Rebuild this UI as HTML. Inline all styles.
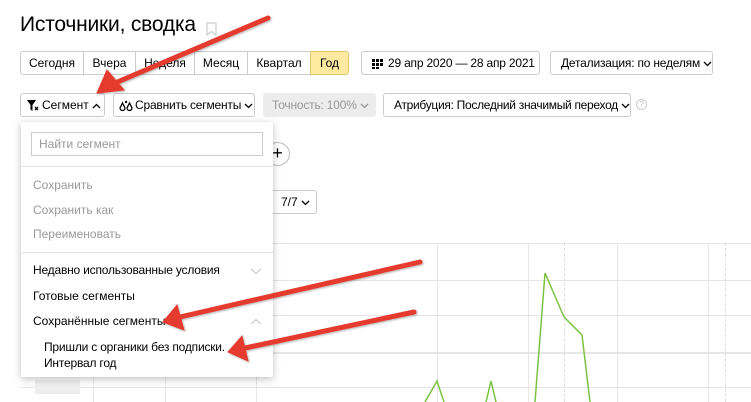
<!DOCTYPE html>
<html><head><meta charset="utf-8"><style>
*{box-sizing:border-box;margin:0;padding:0}
body{width:751px;height:402px;overflow:hidden;background:#fff;font-family:"Liberation Sans",sans-serif;color:#000;position:relative;font-size:12px}
.a{position:absolute}
.btn{position:absolute;border:1px solid #ccc;border-radius:3px;height:24px;line-height:22px;font-size:12px;padding:0 8px;white-space:nowrap;background:#fff}
.seg{position:absolute;top:51px;height:24px;border:1px solid #ccc;line-height:22px;font-size:12px;text-align:center;background:#fff}
.gl{position:absolute;background:#e6e6e6}
.menu{position:absolute;left:21px;top:122px;width:252px;height:255px;background:#fff;box-shadow:0 2px 8px rgba(0,0,0,.25);border-radius:2px}
.mi{position:absolute;left:12px;font-size:12px}
.g{color:#999}
.cv{display:inline-block;vertical-align:middle;margin-left:3px}
</style></head><body>
<div class="a" style="left:20px;top:13px;font-size:21px;letter-spacing:-0.2px">Источники, сводка</div>
<svg class="a" style="left:206px;top:22px" width="11" height="14"><path d="M1 1h9v12l-4.5-3.5L1 13z" fill="none" stroke="#ccc" stroke-width="1.2"/></svg>

<div class="seg" style="left:20px;width:64px;border-radius:3px 0 0 3px">Сегодня</div>
<div class="seg" style="left:83px;width:53px">Вчера</div>
<div class="seg" style="left:135px;width:60px">Неделя</div>
<div class="seg" style="left:194px;width:54px">Месяц</div>
<div class="seg" style="left:247px;width:64px">Квартал</div>
<div class="seg" style="left:310px;width:39px;background:#fdeaa0;border-color:#e2c96e;border-radius:0 3px 3px 0">Год</div>

<div class="btn" style="left:361px;top:51px;width:179px;padding-left:10px;letter-spacing:-0.2px"><svg class="cv" style="margin:0 5px 0 0" width="11" height="10"><g fill="#000"><rect x="0" y="0" width="3" height="3"/><rect x="4" y="0" width="3" height="3"/><rect x="8" y="0" width="3" height="3"/><rect x="0" y="4" width="3" height="3"/><rect x="4" y="4" width="3" height="3"/><rect x="8" y="4" width="3" height="3"/><rect x="0" y="8" width="3" height="2"/><rect x="4" y="8" width="3" height="2"/></g></svg>29 апр 2020 — 28 апр 2021</div>
<div class="btn" style="left:550px;top:51px;width:163px;padding-left:10px;letter-spacing:-0.2px">Детализация: по неделям<svg class="cv" width="9" height="6"><path d="M1 1l3.5 3.5L8 1" fill="none" stroke="#000" stroke-width="1.3"/></svg></div>

<div class="btn" style="left:20px;top:93px;width:85px;padding-left:6px"><svg class="cv" style="margin:0 3px 0 0" width="12" height="11"><path d="M0 0h9L5.5 5v6L3.5 9.5V5z" fill="#000"/><path d="M8 7l3 3M11 7l-3 3" stroke="#000" stroke-width="1.3"/></svg>Сегмент<svg class="cv" width="9" height="6"><path d="M1 5l3.5-3.5L8 5" fill="none" stroke="#000" stroke-width="1.3"/></svg></div>
<div class="btn" style="left:113px;top:93px;width:142px;padding-left:5px;letter-spacing:-0.2px"><svg class="cv" style="margin:0 2px 0 0" width="14" height="12"><path d="M3.5 3L1 8a2.5 2.5 0 005 0z M10.5 3L8 8a2.5 2.5 0 005 0z" fill="none" stroke="#000" stroke-width="1.3"/><circle cx="7" cy="2" r="1.2"/></svg>Сравнить сегменты<svg class="cv" width="9" height="6"><path d="M1 1l3.5 3.5L8 1" fill="none" stroke="#000" stroke-width="1.3"/></svg></div>
<div class="btn" style="left:263px;top:93px;width:113px;background:#ececec;border-color:#ececec;color:#999;letter-spacing:-0.2px">Точность: 100%<svg class="cv" width="9" height="6"><path d="M1 1l3.5 3.5L8 1" fill="none" stroke="#999" stroke-width="1.3"/></svg></div>
<div class="btn" style="left:383px;top:93px;width:248px;padding-left:10px;letter-spacing:-0.3px">Атрибуция: Последний значимый переход<svg class="cv" width="9" height="6"><path d="M1 1l3.5 3.5L8 1" fill="none" stroke="#000" stroke-width="1.3"/></svg></div>
<div class="a" style="left:636px;top:99px;width:11px;height:11px;border:1px solid #ccc;border-radius:50%;font-size:8px;color:#bbb;text-align:center;line-height:9px">?</div>

<div class="a" style="left:265px;top:142px;width:25px;height:24px;border:1px solid #bbb;border-radius:50%;text-align:center;line-height:21px;font-size:18px">+</div>
<div class="btn" style="left:265px;top:190px;width:52px;padding-left:15px">7/7<svg class="cv" width="9" height="6"><path d="M1 1l3.5 3.5L8 1" fill="none" stroke="#000" stroke-width="1.3"/></svg></div>

<div class="gl" style="left:273px;top:243px;width:478px;height:1px"></div>
<div class="gl" style="left:273px;top:280px;width:478px;height:1px"></div>
<div class="gl" style="left:273px;top:315px;width:478px;height:1px"></div>
<div class="gl" style="left:273px;top:352px;width:478px;height:2px"></div>
<div class="gl" style="left:20px;top:387px;width:731px;height:1px"></div>
<div class="gl" style="left:437px;top:243px;width:1px;height:159px"></div>
<div class="gl" style="left:528px;top:243px;width:1px;height:159px"></div>
<div class="gl" style="left:617px;top:243px;width:1px;height:159px"></div>
<div class="gl" style="left:708px;top:243px;width:1px;height:159px"></div>
<div class="gl" style="left:93px;top:377px;width:1px;height:25px"></div>
<div class="gl" style="left:165px;top:377px;width:1px;height:25px"></div>
<div class="gl" style="left:256px;top:377px;width:1px;height:25px"></div>
<div class="a" style="left:564px;top:243px;height:159px;border-left:1px dashed #ddd"></div>
<div class="a" style="left:725px;top:243px;height:159px;border-left:1px dashed #ddd"></div>
<div class="a" style="left:35px;top:380px;width:45px;height:14px;background:#eee"></div>
<svg class="a" style="left:0;top:0" width="751" height="402">
<polyline points="425,402 437,381 444,402" fill="none" stroke="#7cc242" stroke-width="1.5"/>
<polyline points="486,402 491,381 496,402" fill="none" stroke="#7cc242" stroke-width="1.5"/>
<polyline points="535,402 545,273 564,317 582,335 590,402" fill="none" stroke="#7cc242" stroke-width="1.5"/>
</svg>

<div class="menu">
<div class="a" style="left:10px;top:10px;width:232px;height:24px;border:1px solid #ccc;color:#999;padding-left:7px;line-height:22px">Найти сегмент</div>
<div class="a" style="left:0;top:44px;width:252px;height:1px;background:#e5e5e5"></div>
<div class="mi g" style="top:56px">Сохранить</div>
<div class="mi g" style="top:81px">Сохранить как</div>
<div class="mi g" style="top:105px">Переименовать</div>
<div class="a" style="left:0;top:130px;width:252px;height:1px;background:#e5e5e5"></div>
<div class="mi" style="top:141px;letter-spacing:-0.2px">Недавно использованные условия</div>
<svg class="a" style="left:229px;top:146px" width="12" height="7"><path d="M1 1l5 4.5L11 1" fill="none" stroke="#ccc" stroke-width="1.2"/></svg>
<div class="mi" style="top:167px">Готовые сегменты</div>
<div class="mi" style="top:192px">Сохранённые сегменты</div>
<svg class="a" style="left:229px;top:196px" width="12" height="7"><path d="M1 6l5-4.5L11 6" fill="none" stroke="#ccc" stroke-width="1.2"/></svg>
<div class="mi" style="top:217px;left:23px;line-height:16px;letter-spacing:-0.2px">Пришли с органики без подписки.<br>Интервал год</div>
</div>

<svg class="a" style="left:0;top:0" width="751" height="402">
<defs><filter id="s"><feDropShadow dx="1" dy="1" stdDeviation="1" flood-opacity=".3"/></filter></defs>
<g fill="#e53a2f" stroke="#e53a2f" filter="url(#s)">
<line x1="268" y1="18" x2="115" y2="83" stroke-width="5" stroke-linecap="round"/>
<polygon points="97,93 107,70 124,90"/>
<line x1="420" y1="262" x2="180" y2="317" stroke-width="5" stroke-linecap="round"/>
<polygon points="163,322 177,305 184,330"/>
<line x1="414" y1="312" x2="245" y2="348" stroke-width="5" stroke-linecap="round"/>
<polygon points="228,352 242,336 248,361"/>
</g></svg>
</body></html>
